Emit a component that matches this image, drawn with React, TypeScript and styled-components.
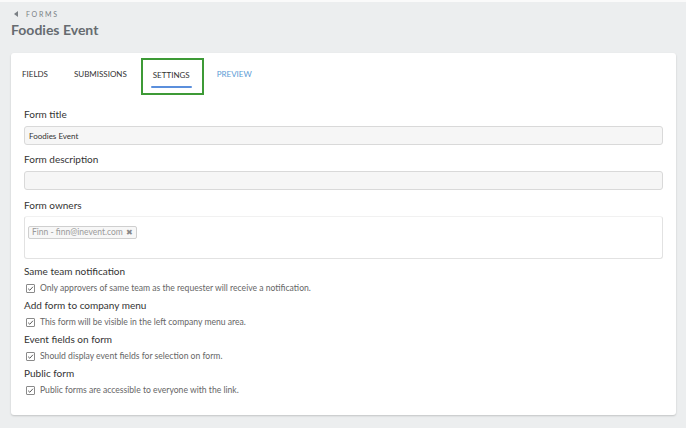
import styled, { createGlobalStyle } from "styled-components";

const GlobalStyle = createGlobalStyle`
  html, body {
    margin: 0;
    padding: 0;
    background: #eceeef;
  }
  body {
    font-family: Lato, "Open Sans", sans-serif;
    color: #333;
  }
`;

const Page = styled.div`
  width: 686px;
  height: 428px;
  box-sizing: border-box;
  padding: 6px 10px 0 11px;
  border-top: 2px solid #fafafa;
`;

const Breadcrumb = styled.div`
  display: flex;
  align-items: center;
  gap: 8px;
  padding-left: 3px;
  height: 12px;
  font-size: 7px;
  letter-spacing: 1.7px;
  color: #7a7f84;
  text-transform: uppercase;
`;

const Caret = styled.span`
  width: 0;
  height: 0;
  border-top: 3px solid transparent;
  border-bottom: 3px solid transparent;
  border-right: 4px solid #7a7f84;
`;

const Title = styled.h1`
  margin: 0;
  font-size: 14px;
  line-height: 20px;
  font-weight: 700;
  color: #666b70;
`;

const Card = styled.div`
  margin-top: 13px;
  background: #fff;
  border-radius: 3px;
  box-shadow: 0 1px 2px rgba(0, 0, 0, 0.18);
  padding: 0 13px 17px;
`;

const Tabs = styled.div`
  display: flex;
  align-items: stretch;
  height: 42px;
  margin-left: -15px;
`;

const Tab = styled.div<{ $active?: boolean; $link?: boolean }>`
  position: relative;
  display: flex;
  align-items: center;
  box-sizing: border-box;
  padding: 0 13px;
  font-size: 8px;
  text-transform: uppercase;
  color: ${(p) => (p.$link ? "#5b9bd5" : "#333")};
  ${(p) =>
    p.$active &&
    `
    margin: 5px 0 0 1px;
    height: 37px;
    padding: 0 12px 3px 10px;
    border: 2px solid #3d9a36;
    &::after {
      content: "";
      position: absolute;
      left: 8px;
      right: 10px;
      bottom: 5px;
      height: 2px;
      background: #5b8fdc;
      border-radius: 1px;
    }
  `}
`;

const Group = styled.div<{ $gap?: number }>`
  margin-top: ${(p) => p.$gap ?? 12}px;
`;

const Label = styled.div`
  font-size: 10px;
  line-height: 14px;
  color: #333;
`;

const Input = styled.div`
  margin-top: 5px;
  height: 19px;
  box-sizing: border-box;
  border: 1px solid #d9d9d9;
  border-radius: 3px;
  background: #f6f6f6;
  display: flex;
  align-items: center;
  padding-left: 4px;
  font-size: 8px;
  color: #333;
`;

const TagBox = styled.div`
  margin-top: 4px;
  height: 43px;
  box-sizing: border-box;
  border: 1px solid #e2e2e2;
  border-top-color: #f1f1f1;
  border-radius: 3px;
  padding: 2px 3px;
`;

const Tag = styled.span`
  display: inline-flex;
  align-items: center;
  gap: 3px;
  height: 13px;
  box-sizing: border-box;
  padding: 0 3px;
  border: 1px solid #cfcfcf;
  border-radius: 2px;
  background: #f7f7f7;
  font-size: 8.5px;
  color: #9a9a9a;
`;

const Remove = styled.span`
  font-size: 8px;
  color: #888;
`;

const Option = styled.div<{ $first?: boolean }>`
  margin-top: ${(p) => (p.$first ? 5 : 2)}px;
`;

const CheckRow = styled.div`
  margin-top: 2px;
  height: 16px;
  display: flex;
  align-items: center;
  gap: 5px;
  padding-left: 2px;
  font-size: 8.6px;
  color: #666;
`;

const Box = styled.span`
  width: 9px;
  height: 9px;
  box-sizing: border-box;
  border: 1px solid #8a8a8a;
  border-radius: 1px;
  display: flex;
  align-items: center;
  justify-content: center;
`;

const Check = () => (
  <Box>
    <svg width="7" height="7" viewBox="0 0 8 8">
      <path d="M1.3 4.2 L3.2 6 L6.8 2" fill="none" stroke="#555" strokeWidth="1.1" />
    </svg>
  </Box>
);

const options = [
  ["Same team notification", "Only approvers of same team as the requester will receive a notification."],
  ["Add form to company menu", "This form will be visible in the left company menu area."],
  ["Event fields on form", "Should display event fields for selection on form."],
  ["Public form", "Public forms are accessible to everyone with the link."],
];

export default function App() {
  return (
    <>
      <GlobalStyle />
      <Page>
        <Breadcrumb>
          <Caret />
          Forms
        </Breadcrumb>
        <Title>Foodies Event</Title>
        <Card>
          <Tabs>
            <Tab>Fields</Tab>
            <Tab>Submissions</Tab>
            <Tab $active>Settings</Tab>
            <Tab $link>Preview</Tab>
          </Tabs>
          <Group>
            <Label>Form title</Label>
            <Input>Foodies Event</Input>
          </Group>
          <Group $gap={7}>
            <Label>Form description</Label>
            <Input />
          </Group>
          <Group $gap={8}>
            <Label>Form owners</Label>
            <TagBox>
              <Tag>
                Finn - finn@inevent.com <Remove>✖</Remove>
              </Tag>
            </TagBox>
          </Group>
          {options.map(([title, text], i) => (
            <Option key={title} $first={i === 0}>
              <Label>{title}</Label>
              <CheckRow>
                <Check />
                {text}
              </CheckRow>
            </Option>
          ))}
        </Card>
      </Page>
    </>
  );
}
